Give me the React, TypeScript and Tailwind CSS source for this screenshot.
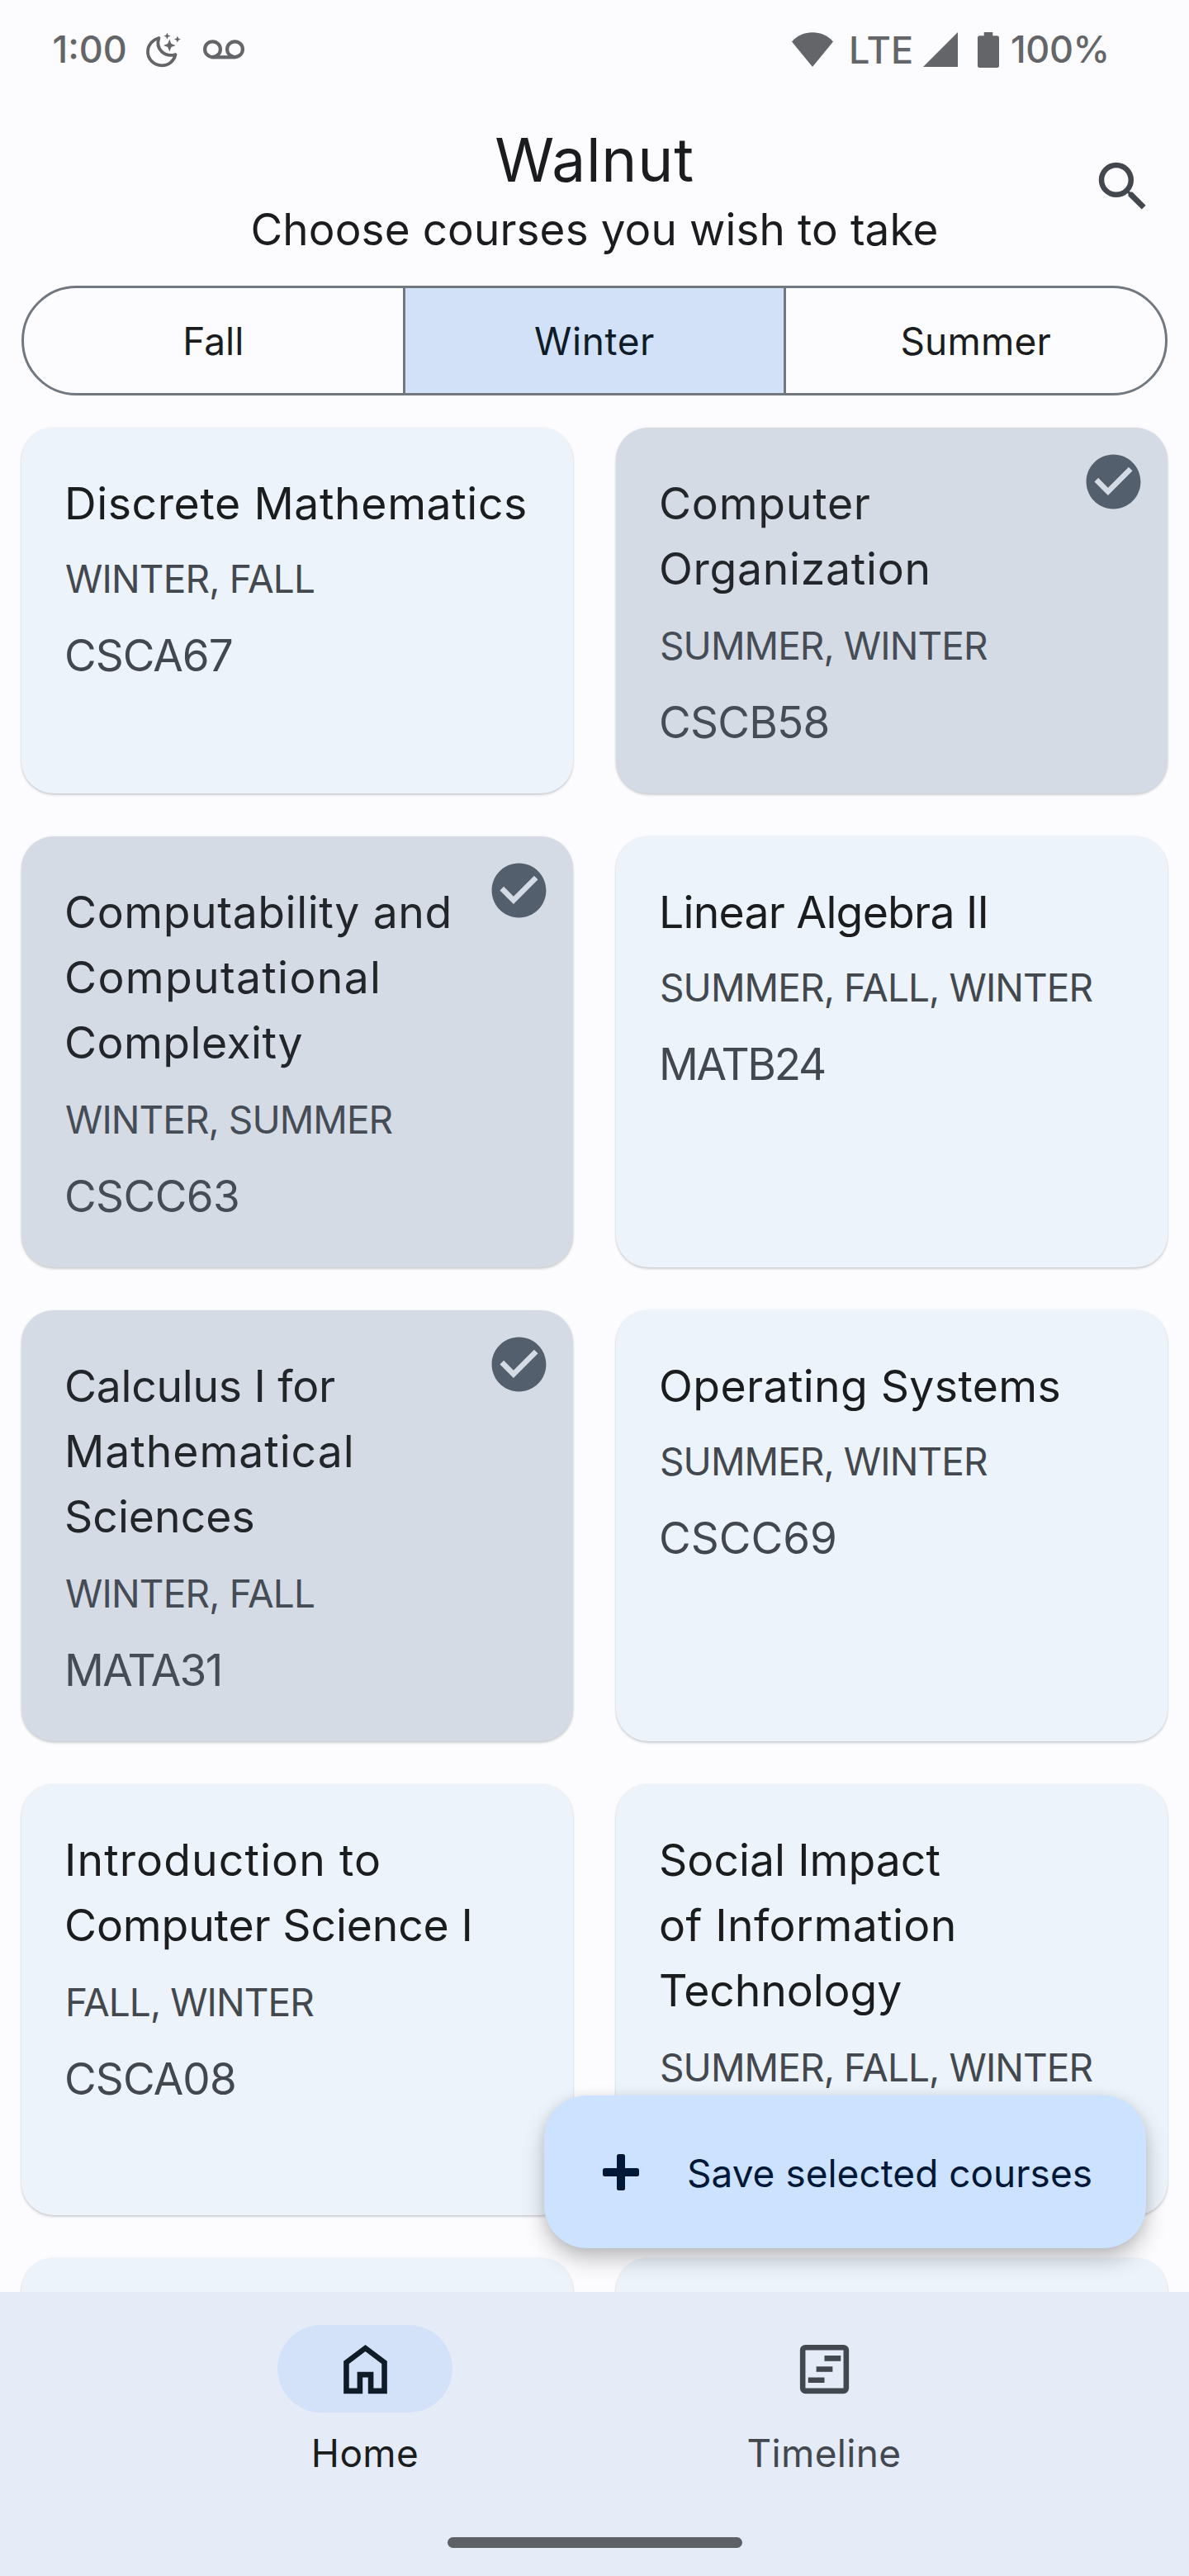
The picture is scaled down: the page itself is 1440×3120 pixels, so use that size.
import type { ReactNode } from "react";

type Line = { text: string; tracking: string };
type Course = {
  title: Line[];
  terms: Line;
  code: Line;
  selected?: boolean;
};

const TERMS = {
  winterFall: { text: "WINTER, FALL", tracking: "tracking-[-0.84px]" },
  fallWinter: { text: "FALL, WINTER", tracking: "tracking-[-0.95px]" },
  summerWinter: { text: "SUMMER, WINTER", tracking: "tracking-[-0.93px]" },
  winterSummer: { text: "WINTER, SUMMER", tracking: "tracking-[-0.95px]" },
  all: { text: "SUMMER, FALL, WINTER", tracking: "tracking-[-0.91px]" },
};

const COURSES: Course[] = [
  {
    title: [{ text: "Discrete Mathematics", tracking: "tracking-[0.6px]" }],
    terms: TERMS.winterFall,
    code: { text: "CSCA67", tracking: "tracking-[-1.03px]" },
  },
  {
    title: [
      { text: "Computer", tracking: "tracking-[0.75px]" },
      { text: "Organization", tracking: "tracking-[0.7px]" },
    ],
    terms: TERMS.summerWinter,
    code: { text: "CSCB58", tracking: "tracking-[-0.75px]" },
    selected: true,
  },
  {
    title: [
      { text: "Computability and", tracking: "tracking-[0.58px]" },
      { text: "Computational", tracking: "tracking-[1.3px]" },
      { text: "Complexity", tracking: "tracking-[0.45px]" },
    ],
    terms: TERMS.winterSummer,
    code: { text: "CSCC63", tracking: "tracking-[-0.6px]" },
    selected: true,
  },
  {
    title: [{ text: "Linear Algebra II", tracking: "tracking-[-0.78px]" }],
    terms: TERMS.all,
    code: { text: "MATB24", tracking: "tracking-[-2.26px]" },
  },
  {
    title: [
      { text: "Calculus I for", tracking: "tracking-[-0.3px]" },
      { text: "Mathematical", tracking: "tracking-[0.95px]" },
      { text: "Sciences", tracking: "tracking-normal" },
    ],
    terms: TERMS.winterFall,
    code: { text: "MATA31", tracking: "tracking-[-1.66px]" },
    selected: true,
  },
  {
    title: [{ text: "Operating Systems", tracking: "tracking-[0.37px]" }],
    terms: TERMS.summerWinter,
    code: { text: "CSCC69", tracking: "tracking-normal" },
  },
  {
    title: [
      { text: "Introduction to", tracking: "tracking-[1.08px]" },
      { text: "Computer Science I", tracking: "tracking-[-0.16px]" },
    ],
    terms: TERMS.fallWinter,
    code: { text: "CSCA08", tracking: "tracking-[-0.9px]" },
  },
  {
    title: [
      { text: "Social Impact", tracking: "tracking-[0.03px]" },
      { text: "of Information", tracking: "tracking-[0.4px]" },
      { text: "Technology", tracking: "tracking-[-0.11px]" },
    ],
    terms: TERMS.all,
    code: { text: "", tracking: "tracking-normal" },
  },
];

function StatusBar() {
  return (
    <div className="flex h-[120px] shrink-0 items-start justify-between pr-[98px] pl-[63.5px] text-[45px] leading-[54px] font-medium text-[#646568]">
      <div className="flex items-start pt-[32.5px]">
        <span className="w-[90px]">1:00</span>
        <svg className="mt-[7px] ml-[23px] h-[43px] w-[43px]" viewBox="0 0 43 43" fill="none">
          <path
            d="M15.5 6C7 8.5 2 15 2 22.5C2 32 9.5 39.3 19 39.3C27 39.3 33.8 34 35.5 26C22 30 11 19 15.5 6Z"
            stroke="currentColor"
            strokeWidth="3.8"
            strokeLinejoin="round"
          />
          <path
            d="M28.3 7.6L30.4 12.9L35.6 15L30.4 17.1L28.3 22.4L26.2 17.1L21 15L26.2 12.9ZM25.4 -0.4L26.6 2.4L29.4 3.6L26.6 4.8L25.4 7.6L24.2 4.8L21.4 3.6L24.2 2.4ZM37.9 3.6L39.1 6.4L41.9 7.6L39.1 8.8L37.9 11.6L36.7 8.8L33.9 7.6L36.7 6.4Z"
            fill="currentColor"
          />
        </svg>
        <svg className="mt-[15px] ml-[26px] h-[24px] w-[50px]" viewBox="0 0 50 24" fill="none" stroke="currentColor" strokeWidth="4.2">
          <circle cx="11.5" cy="11.7" r="9.4" />
          <circle cx="38.5" cy="11.7" r="9.4" />
          <path d="M11.5 21.3H38.5" />
        </svg>
      </div>
      <div className="flex items-start pt-[32.5px]">
        <svg className="mt-[6px] h-[42px] w-[50px]" viewBox="0 0 50 42" fill="currentColor">
          <path d="M0 11.5C6.5 4 15.5 0.3 25 0.3S43.500 4 50 11.500L25 42Z" />
        </svg>
        <span className="mt-[1px] ml-[19px] w-[77px] tracking-[0.2px]">LTE</span>
        <svg className="mt-[6px] ml-[13px] h-[42px] w-[42px]" viewBox="0 0 42 42" fill="currentColor">
          <path d="M0 42L42 0V42Z" />
        </svg>
        <svg className="mt-[6px] ml-[24px] h-[43px] w-[26px]" viewBox="0 0 26 43" fill="currentColor">
          <path d="M7.700 0H18.300V4.200H23.500A2.500 2.500 0 0 1 26 6.700V40.500A2.500 2.500 0 0 1 23.500 43H2.500A2.500 2.500 0 0 1 0 40.500V6.700A2.500 2.500 0 0 1 2.500 4.200H7.700Z" />
        </svg>
        <span className="ml-[14px] w-[118px] tracking-[-0.42px]">100%</span>
      </div>
    </div>
  );
}

function Header() {
  return (
    <header className="grid shrink-0 grid-cols-[1fr_auto_1fr] items-start pt-[25px] text-[#1a1c1e]">
      <div />
      <div className="text-center">
        <h1 className="text-[73px] leading-[98px] tracking-[0.76px]">Walnut</h1>
        <p className="text-[53px] leading-[70px] tracking-[0.12px] whitespace-nowrap">
          Choose courses you wish to take
        </p>
      </div>
      <button className="mt-[42px] mr-[41px] justify-self-end text-[#43474e]" aria-label="Search">
        <svg className="size-[78px]" viewBox="0 0 24 24" fill="currentColor">
          <path d="M15.5 14h-.79l-.28-.27A6.471 6.471 0 0 0 16 9.500 6.500 6.500 0 1 0 9.500 16c1.610 0 3.090-.590 4.230-1.570l.270.280v.790l5 4.990L20.490 19l-4.990-5zm-6 0C7.010 14 5 11.990 5 9.500S7.010 5 9.500 5 14 7.010 14 9.500 11.990 14 9.500 14z" />
        </svg>
      </button>
    </header>
  );
}

function SeasonTabs() {
  return (
    <div className="mx-[26px] mt-[33px] flex h-[133px] shrink-0 text-[46px] text-[#1a1c1e]">
      <button className="flex-1 rounded-l-full border-[3px] border-[#72787f] pt-[2px]">Fall</button>
      <button className="-mx-[3px] flex-1 border-[3px] border-[#72787f] bg-[#d3e1f8] pt-[2px] tracking-[0.59px] text-[#0e1b29]">
        Winter
      </button>
      <button className="flex-1 rounded-r-full border-[3px] border-[#72787f] pt-[2px] tracking-[0.18px]">Summer</button>
    </div>
  );
}

function CourseCard({ course }: { course: Course }) {
  const surface = course.selected ? "bg-[#d5dbe4] text-[#22262a]" : "bg-[#ecf3fb] text-[#1a1c1e]";
  const secondary = course.selected ? "text-[#454c56]" : "text-[#43474e]";
  return (
    <article
      className={`relative rounded-[39px] px-[52px] pt-[52px] whitespace-nowrap shadow-[0_2px_3px_rgba(0,0,0,0.17),0_0_3px_rgba(0,0,0,0.07)] ${surface}`}
    >
      <h2 className={`text-[53.5px] leading-[79px] ${course.title.length > 1 ? "pb-[2px]" : ""}`}>
        {course.title.map((line) => (
          <span key={line.text} className={`block ${line.tracking}`}>
            {line.text}
          </span>
        ))}
      </h2>
      <p className={`mt-[22px] pl-px text-[46px] leading-[60px] ${course.terms.tracking} ${secondary}`}>
        {course.terms.text}
      </p>
      <p className={`mt-[24px] text-[53px] leading-[78px] ${course.code.tracking} ${secondary}`}>{course.code.text}</p>
      {course.selected && (
        <svg className="absolute top-[26px] right-[26px] size-[79px] text-[#535f6d]" viewBox="0 0 24 24" fill="currentColor">
          <path d="M12 2C6.480 2 2 6.480 2 12s4.480 10 10 10 10-4.480 10-10S17.520 2 12 2zm-2 15l-5-5 1.410-1.410L10 14.170l7.590-7.590L19 8l-9 9z" />
        </svg>
      )}
    </article>
  );
}

function EmptyCard() {
  return <div className="rounded-[39px] bg-[#ecf3fb] shadow-[0_2px_3px_rgba(0,0,0,0.17),0_0_3px_rgba(0,0,0,0.07)]" />;
}

function NavItem({ label, active, children }: { label: string; active?: boolean; children: ReactNode }) {
  return (
    <button className={`flex w-[212px] flex-col items-center ${active ? "text-[#1a1c1e]" : "text-[#43474e]"}`}>
      <span
        className={`flex h-[106px] w-full items-center justify-center rounded-full ${active ? "bg-[#d3e2f8] text-[#0f1c28]" : ""}`}
      >
        <svg className="size-[79px]" viewBox="0 0 24 24" fill="currentColor">
          {children}
        </svg>
      </span>
      <span className="mt-[19px] text-[46px] leading-[60px] tracking-[0.35px]">{label}</span>
    </button>
  );
}

export default function App() {
  return (
    <div className="flex h-[3120px] w-[1440px] flex-col overflow-hidden bg-[#fcfcff] font-['Inter',sans-serif]">
      <StatusBar />
      <Header />
      <SeasonTabs />
      <main className="relative mt-[29px] min-h-0 flex-1 overflow-hidden px-[26px] pt-[10px]">
        <div className="grid grid-cols-2 grid-rows-[443px_522px_522px_522px_522px] gap-[52px]">
          {COURSES.map((course) => (
            <CourseCard key={course.title[0].text} course={course} />
          ))}
          <EmptyCard />
          <EmptyCard />
        </div>
        <button className="absolute right-[52px] bottom-[53px] flex h-[185px] w-[729px] items-center rounded-[52px] bg-[#cde2ff] pl-[71px] text-[#001837] shadow-[0_14px_28px_-2px_rgba(0,0,0,0.26),0_0_14px_rgba(0,0,0,0.07)]">
          <svg className="size-[44px]" viewBox="0 0 44 44" fill="currentColor">
            <rect x="17" y="0" width="10" height="44" rx="2.500" />
            <rect x="0" y="17" width="44" height="10" rx="2.500" />
          </svg>
          <span className="ml-[58px] pt-[3px] text-[46px] whitespace-nowrap">Save selected courses</span>
        </button>
      </main>
      <nav className="relative flex h-[344px] shrink-0 flex-col items-center bg-[#e5ecf7] pt-[40px]">
        <div className="flex gap-[344px]">
          <NavItem label="Home" active>
            <path d="M6 19h3v-6h6v6h3v-9l-6-4.500L6 10v9zm-2 2V9l8-6 8 6v12h-7v-6h-2v6H4z" />
          </NavItem>
          <NavItem label="Timeline">
            <path d="M19 3H5a2 2 0 0 0-2 2v14a2 2 0 0 0 2 2h14a2 2 0 0 0 2-2V5a2 2 0 0 0-2-2zm0 16H5V5h14v14zM12 7h6v2h-6zM9 11h6v2H9zM6 15h6v2H6z" />
          </NavItem>
        </div>
        <div className="mt-[72px] h-[13px] w-[357px] rounded-full bg-[#5d6064]" />
      </nav>
    </div>
  );
}
